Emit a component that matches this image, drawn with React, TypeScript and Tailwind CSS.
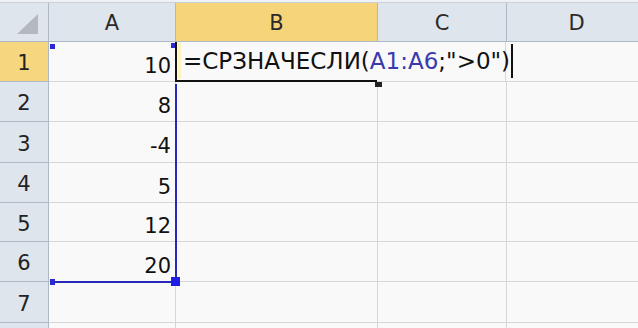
import React from "react";

const cols = ["A", "B", "C", "D"];
const colW = [127, 202, 129, 140];
const rowH = [40, 40, 41, 40, 39, 40, 41, 20];
const values: Record<number, string> = { 1: "10", 2: "8", 3: "-4", 4: "5", 5: "12", 6: "20" };

function Cell({ w, children, className = "" }: { w: number; children?: React.ReactNode; className?: string }) {
  return (
    <div style={{ width: w }} className={`shrink-0 border-r border-b border-[#d6d6d6] bg-[#f9f9f9] ${className}`}>
      {children}
    </div>
  );
}

export default function App() {
  const font = { fontFamily: '"DejaVu Sans", "Liberation Sans", sans-serif' };
  return (
    <div className="w-[638px] h-[328px] overflow-hidden bg-[#f8f8f8] relative text-[21px]" style={font}>
      <div className="h-[3px] bg-[#eef1f5] border-b border-[#c9d0d8]" />
      {/* header row */}
      <div className="flex h-[39px]">
        <div className="w-[49px] shrink-0 bg-[#dfe5ec] border-r border-b border-[#aeb9c6] flex items-end justify-end pr-[9px] pb-[7px]">
          <svg width="22" height="20" viewBox="0 0 22 20">
            <polygon points="21,0 21,20 0,20" fill="#b4b9bf" />
          </svg>
        </div>
        {cols.map((c, ci) => (
          <div
            key={c}
            style={{ width: colW[ci] }}
            className={`shrink-0 border-r border-b border-[#aeb9c6] flex items-center justify-center pt-[4px] text-[#2a2a2a] ${
              ci === 1 ? "bg-[#f6d47a]" : "bg-[#dfe5ec]"
            }`}
          >
            {c}
          </div>
        ))}
      </div>
      {rowH.map((h, i) => (
        <div key={i} className="flex" style={{ height: h }}>
          <div
            className={`w-[49px] shrink-0 border-r border-b border-[#aeb9c6] flex items-center justify-center pt-[5px] text-[#222] ${
              i === 0 ? "bg-[#f6d77f]" : "bg-[#dfe5ec]"
            }`}
          >
            {i < 7 ? i + 1 : ""}
          </div>
          <Cell w={colW[0]} className="flex items-center justify-end pr-[4px] pt-[10px] text-[#111]">
            {values[i + 1] ?? ""}
          </Cell>
          {i === 0 ? (
            <div
              style={{ width: colW[1] }}
              className="shrink-0 relative z-10 border-l-2 border-b-2 border-[#111] -ml-[1px] bg-[#f9f9f9] flex items-center pl-[1px] whitespace-nowrap text-[#111] text-[23px]"
            >
              <span className="shrink-0 w-[3px] h-[36px] bg-[#fbf3c0] mr-[2px]" />
              <span className="shrink-0">=СРЗНАЧЕСЛИ(</span>
              <span className="shrink-0 text-[#3a3ab0]">A1:A6</span>
              <span className="shrink-0">;"&gt;0")</span>
              <span className="shrink-0 w-[2px] h-[34px] bg-[#111] ml-[1px]" />
            </div>
          ) : (
            <Cell w={colW[1]} />
          )}
          <Cell w={colW[2]} />
          <Cell w={colW[3]} />
        </div>
      ))}

      {/* fill handle of editing cell */}
      <div className="absolute z-20 left-[375px] top-[82px] w-[7px] h-[5px] bg-[#222]" />

      {/* selection range A1:A6 */}
      <div className="absolute z-20 left-[175px] top-[84px] w-[2px] h-[199px] bg-[#2727b8]" />
      <div className="absolute z-20 left-[51px] top-[281px] w-[126px] h-[2px] bg-[#2727b8]" />
      <div className="absolute z-20 left-[50px] top-[44px] w-[5px] h-[5px] bg-[#2a2ad0]" />
      <div className="absolute z-20 left-[171px] top-[43px] w-[4px] h-[5px] bg-[#2a2ad0]" />
      <div className="absolute z-20 left-[50px] top-[279px] w-[5px] h-[6px] bg-[#2a2ad0]" />
      <div className="absolute z-20 left-[171px] top-[277px] w-[9px] h-[9px] bg-[#1e1ee6]" />
    </div>
  );
}
